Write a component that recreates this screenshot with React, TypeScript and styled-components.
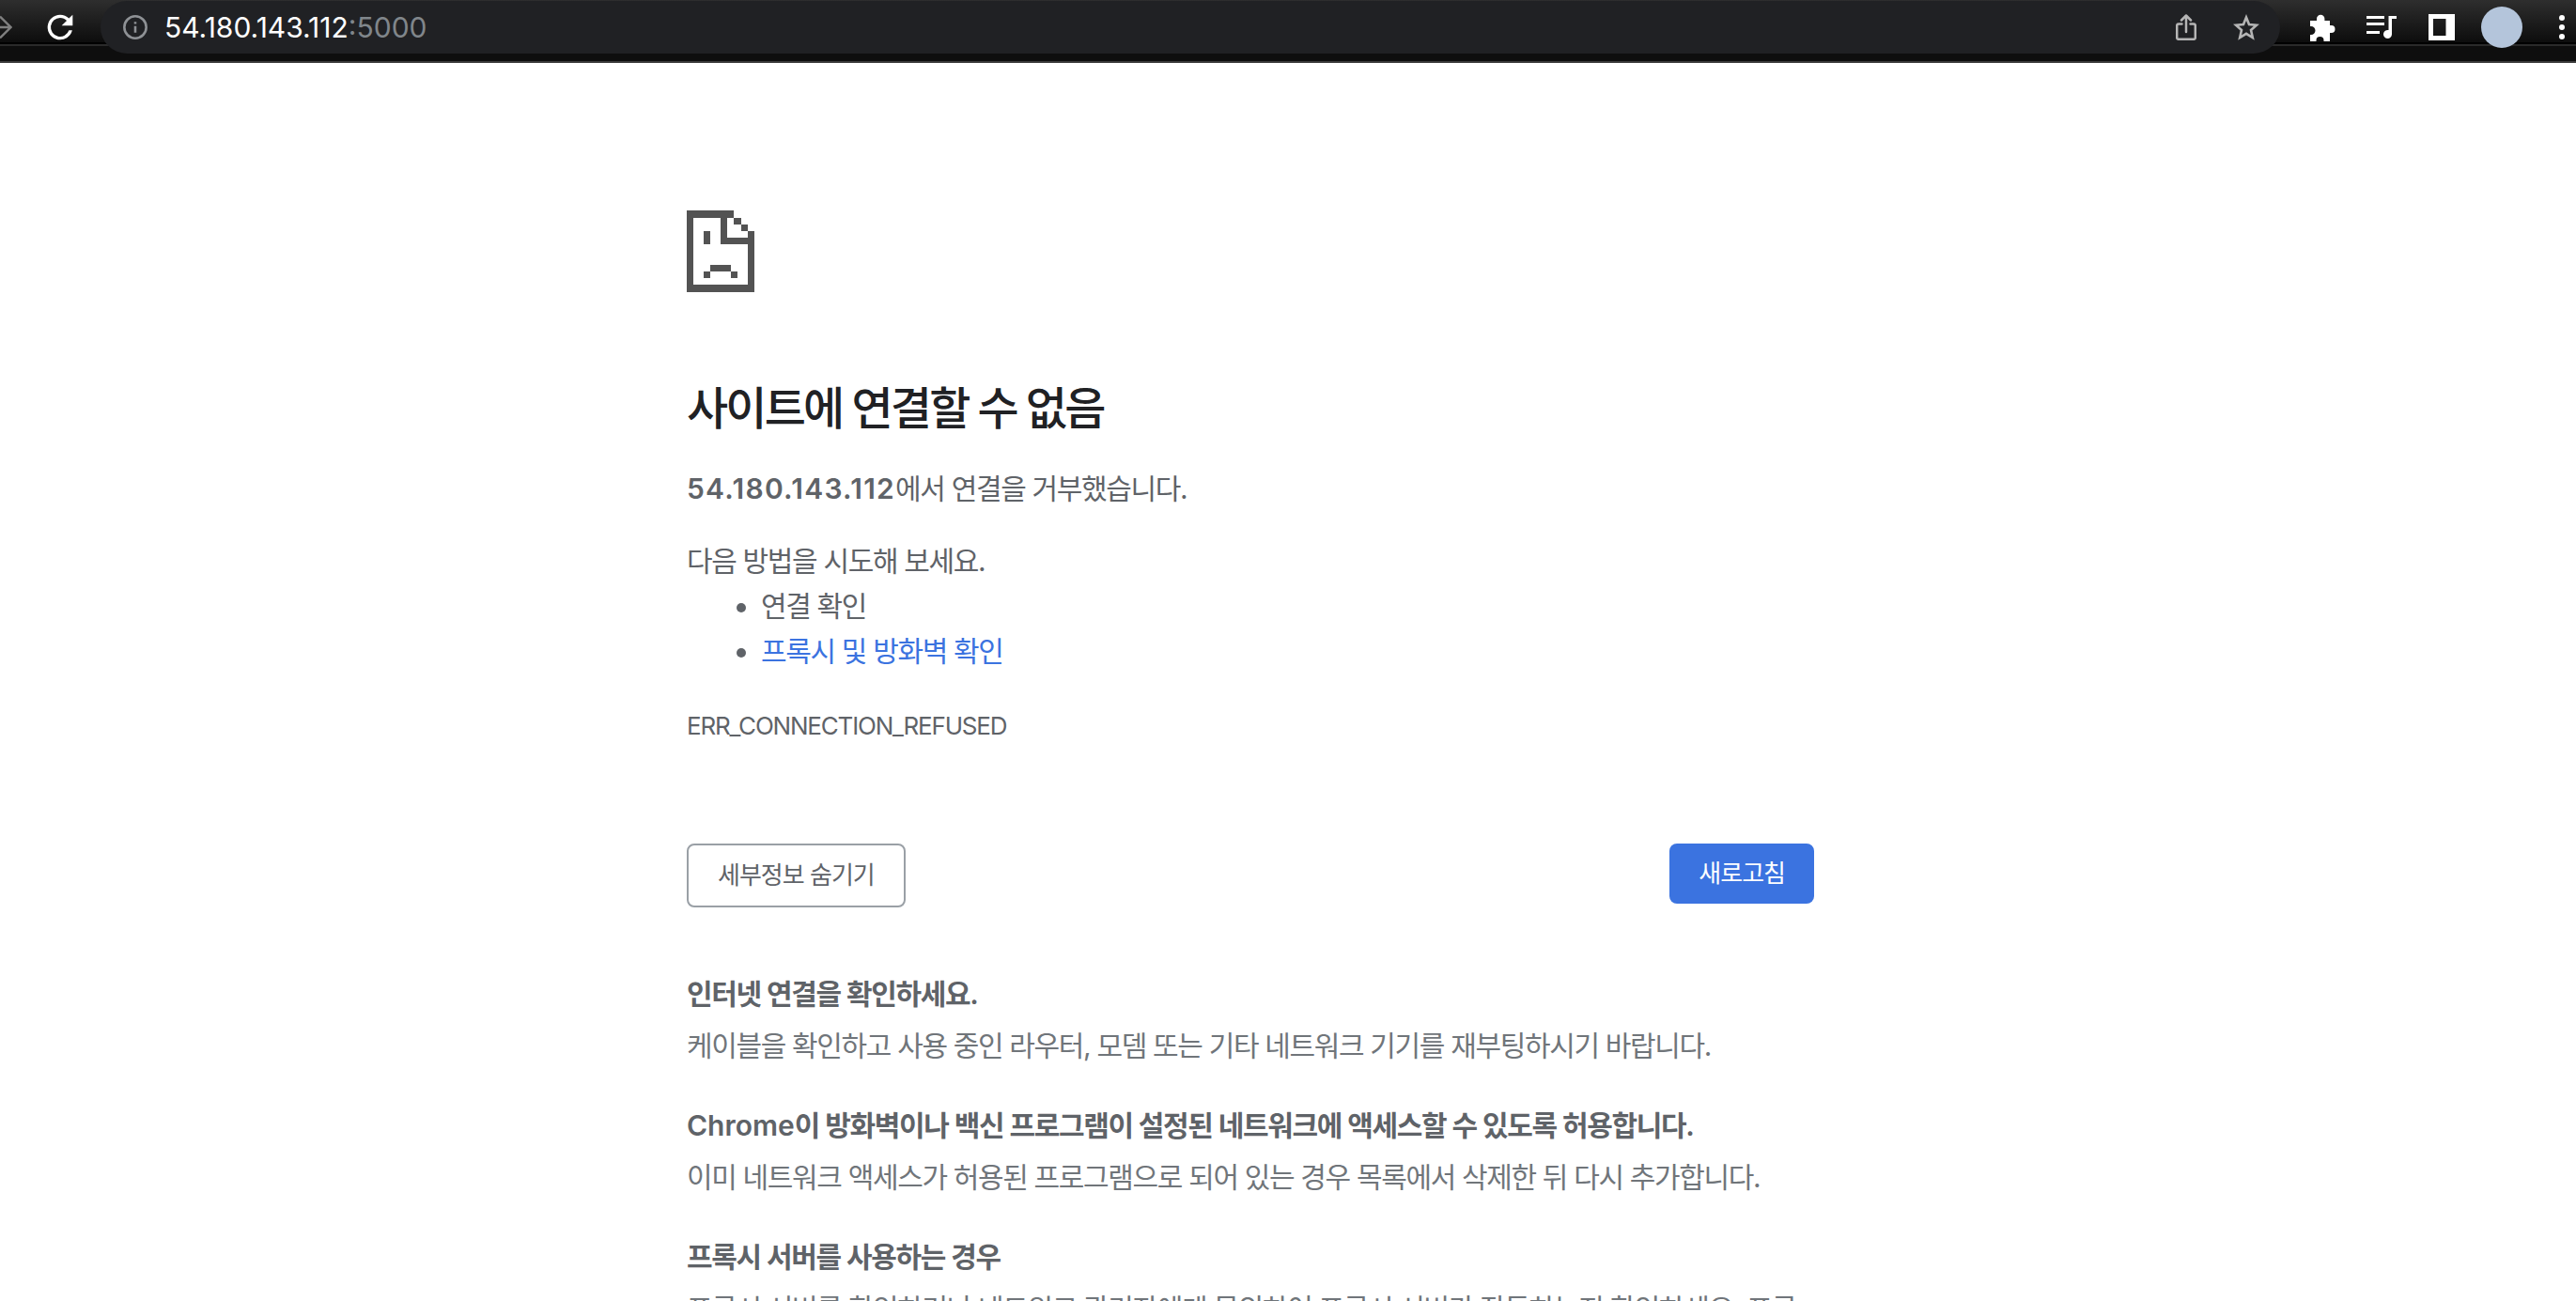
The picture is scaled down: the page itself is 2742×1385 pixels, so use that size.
import React from "react"
import styled, {createGlobalStyle} from "styled-components"

const Global = createGlobalStyle`
  html, body {
    margin: 0;
    padding: 0;
    height: 100%;
    overflow: hidden;
    background: #fff;
  }
`

const Root = styled.div`
  width: 2742px;
  height: 1385px;
  overflow: hidden;
  display: flex;
  flex-direction: column;
  font-family: Inter, "Noto Sans CJK KR", sans-serif;
  color: #5f6368;
`

const Toolbar = styled.header`
  flex: none;
  height: 67px;
  overflow: hidden;
  display: flex;
  align-items: flex-start;
  background: linear-gradient(#2e2e2e 0, #0d0d0d 45px, #000 45px, #000 47px, #2a2a2a 47px, #2a2a2a 49px, #0e0e0e 49px, #0e0e0e 65px, #3a3a3a 65px);
`

const IconSlot = styled.div<{$width: number, $start?: boolean}>`
  flex: none;
  width: ${p => p.$width}px;
  height: 58px;
  display: flex;
  align-items: center;
  justify-content: ${p => p.$start ? "flex-start" : "center"};
`

const Omnibox = styled.div`
  flex: none;
  width: 2320px;
  height: 56px;
  margin: 1px 12px 0 0;
  padding: 0 22px 0 23px;
  box-sizing: border-box;
  display: flex;
  align-items: center;
  justify-content: space-between;
  background: #202124;
  border-radius: 28px;
`

const Address = styled.div`
  display: flex;
  align-items: center;
  gap: 17px;
  font-size: 30px;
  color: #fff;
`

const Port = styled.span`
  color: #80868b;
`

const OmniActions = styled.div`
  display: flex;
  align-items: center;
  gap: 39px;
`

const Avatar = styled.div`
  width: 44px;
  height: 44px;
  border-radius: 50%;
  background: #b4c5db;
`

const Page = styled.main`
  width: 1200px;
  margin-left: 731px;
  padding-top: 157px;
  display: flex;
  flex-direction: column;
`

const Title = styled.h1`
  margin: 94px 0 0;
  font-size: 48px;
  font-weight: 500;
  line-height: 60px;
  letter-spacing: -2.800px;
  color: #202124;
`

const Text = styled.p<{$top: number}>`
  margin: ${p => p.$top}px 0 0;
  font-size: 30px;
  line-height: 48px;
  letter-spacing: -1.350px;
`

const Strong = styled.strong`
  font-weight: 600;
  letter-spacing: 1.250px;
`

const Tips = styled.ul`
  margin: 0;
  padding-left: 79px;
  font-size: 30px;
  line-height: 48px;
  letter-spacing: -1.350px;
`

const Link = styled.a`
  color: #3b73e0;
`

const Code = styled.div`
  margin-top: 36px;
  font-size: 26px;
  line-height: 40px;
  letter-spacing: -1.200px;
`

const Buttons = styled.div`
  margin-top: 105px;
  display: flex;
  justify-content: space-between;
  align-items: flex-start;
`

const Button = styled.button<{$primary?: boolean}>`
  height: ${p => p.$primary ? 64 : 68}px;
  padding: 0 ${p => p.$primary ? 31 : 31}px 5px;
  border: ${p => p.$primary ? "none" : "2px solid #9aa0a6"};
  border-radius: 8px;
  background: ${p => p.$primary ? "#3b73e0" : "#fff"};
  color: ${p => p.$primary ? "#fff" : "#5f6368"};
  font-family: inherit;
  font-size: 26px;
  letter-spacing: -1px;
`

const Section = styled.section<{$top: number}>`
  display: flex;
  flex-direction: column;
  gap: 15px;
  margin-top: ${p => p.$top}px;
`

const SectionTitle = styled.div`
  font-size: 30px;
  font-weight: 600;
  line-height: 40px;
  letter-spacing: -1.350px;
`

const Latin = styled.span`
  letter-spacing: 0;
`

const SectionBody = styled.div`
  font-size: 30px;
  line-height: 40px;
  letter-spacing: -1.350px;
  color: #70757a;
  white-space: nowrap;
`

const SadFile = () => (
    <svg width="72" height="87" viewBox="0 0 10 12" fill="#535353" shapeRendering="crispEdges">
        <path d="M0 0H7V1H6V4H9V3H10V12H0ZM1 1V11H9V5H5V1Z"/>
        <path d="M7 1H8V2H7ZM8 2H9V3H8Z"/>
        <path d="M2.500 3H3.500V5H2.500ZM3.500 8H6.500V9H3.500ZM2.500 9H3.500V10H2.500ZM6.500 9H7.500V10H6.500Z"/>
    </svg>
)

const ForwardArrow = () => (
    <svg width="13" height="26" viewBox="0 0 13 26" fill="none" stroke="#808080" strokeWidth="2.400">
        <path d="M0 13H11M0 1.500 11.500 13 0 24.500"/>
    </svg>
)

const Reload = () => (
    <svg width="40" height="40" viewBox="0 0 24 24" fill="#fff">
        <path d="M17.650 6.350A7.950 7.950 0 0 0 12 4a8 8 0 1 0 7.730 10h-2.080A6 6 0 1 1 12 6c1.660 0 3.140.690 4.220 1.780L13 11h7V4z"/>
    </svg>
)

const InfoIcon = () => (
    <svg width="28" height="28" viewBox="0 0 24 24" fill="none" stroke="#8e9195" strokeWidth="2.200">
        <circle cx="12" cy="12" r="10"/>
        <path d="M12 11v6M12 7v2"/>
    </svg>
)

const ShareIcon = () => (
    <svg width="22" height="28" viewBox="0 0 22 28" fill="none" stroke="#b5b5b5" strokeWidth="2.500" strokeLinecap="round" strokeLinejoin="round">
        <path d="M6.500 10.500H3a1.800 1.800 0 0 0-1.800 1.800v12.700A1.800 1.800 0 0 0 3 26.800h16a1.800 1.800 0 0 0 1.800-1.800V12.300a1.800 1.800 0 0 0-1.800-1.800h-3.500"/>
        <path d="M11 19V2M6 6.500 11 1.500l5 5"/>
    </svg>
)

const StarIcon = () => (
    <svg width="28" height="28" viewBox="0 0 28 28" fill="none" stroke="#b5b5b5" strokeWidth="2.600">
        <path d="M14 3.500 17 11 25 11.700 19 17 20.800 25 14 20.800 7.200 25 9 17 3 11.700 11 11Z"/>
    </svg>
)

const PuzzleIcon = () => (
    <svg width="29" height="29" viewBox="0 0 29 29" fill="#fff">
        <path d="M2 7H9V5a4.200 4.200 0 0 1 8.400 0V7H23V12h1.500a4 4 0 0 1 0 8H23V29H16.500V28a4 4 0 0 0-8 0V29H2V22h1a4.500 4.500 0 0 0 0-9H2Z"/>
    </svg>
)

const QueueIcon = () => (
    <svg width="32" height="24" viewBox="0 0 32 24" fill="#fff">
        <path d="M0 0H19V3H0ZM0 7H19V10H0ZM0 16H14V19H0ZM23.500 0H32V3H27V19.500a4.500 4.500 0 1 1-3.500-4.400Z"/>
    </svg>
)

const SideIcon = () => (
    <svg width="28" height="28" viewBox="0 0 28 28" fill="#fff">
        <path fillRule="evenodd" d="M0 0H28V28H0ZM5 5V23H18.500V5Z"/>
    </svg>
)

const MoreIcon = () => (
    <svg width="6" height="26" viewBox="0 0 6 26" fill="#fff">
        <circle cx="3" cy="3" r="3"/>
        <circle cx="3" cy="13" r="3"/>
        <circle cx="3" cy="23" r="3"/>
    </svg>
)

const App = () => (
    <Root>
        <Global/>
        <Toolbar>
            <IconSlot $width={20} $start><ForwardArrow/></IconSlot>
            <IconSlot $width={87}><Reload/></IconSlot>
            <Omnibox>
                <Address>
                    <InfoIcon/>
                    <span>54.180.143.112<Port>:5000</Port></span>
                </Address>
                <OmniActions>
                    <ShareIcon/>
                    <StarIcon/>
                </OmniActions>
            </Omnibox>
            <IconSlot $width={64}><PuzzleIcon/></IconSlot>
            <IconSlot $width={64}><QueueIcon/></IconSlot>
            <IconSlot $width={64}><SideIcon/></IconSlot>
            <IconSlot $width={64}><Avatar/></IconSlot>
            <IconSlot $width={64}><MoreIcon/></IconSlot>
        </Toolbar>
        <Page>
            <SadFile/>
            <Title>사이트에 연결할 수 없음</Title>
            <Text $top={31}><Strong>54.180.143.112</Strong>에서 연결을 거부했습니다.</Text>
            <Text $top={29}>다음 방법을 시도해 보세요.</Text>
            <Tips>
                <li>연결 확인</li>
                <li><Link>프록시 및 방화벽 확인</Link></li>
            </Tips>
            <Code>ERR_CONNECTION_REFUSED</Code>
            <Buttons>
                <Button>세부정보 숨기기</Button>
                <Button $primary>새로고침</Button>
            </Buttons>
            <Section $top={72}>
                <SectionTitle>인터넷 연결을 확인하세요.</SectionTitle>
                <SectionBody>케이블을 확인하고 사용 중인 라우터, 모뎀 또는 기타 네트워크 기기를 재부팅하시기 바랍니다.</SectionBody>
            </Section>
            <Section $top={45}>
                <SectionTitle><Latin>Chrome</Latin>이 방화벽이나 백신 프로그램이 설정된 네트워크에 액세스할 수 있도록 허용합니다.</SectionTitle>
                <SectionBody>이미 네트워크 액세스가 허용된 프로그램으로 되어 있는 경우 목록에서 삭제한 뒤 다시 추가합니다.</SectionBody>
            </Section>
            <Section $top={45}>
                <SectionTitle>프록시 서버를 사용하는 경우</SectionTitle>
                <SectionBody>프록시 서버를 확인하거나 네트워크 관리자에게 문의하여 프록시 서버가 작동하는지 확인하세요. 프록</SectionBody>
            </Section>
        </Page>
    </Root>
)

export default App
